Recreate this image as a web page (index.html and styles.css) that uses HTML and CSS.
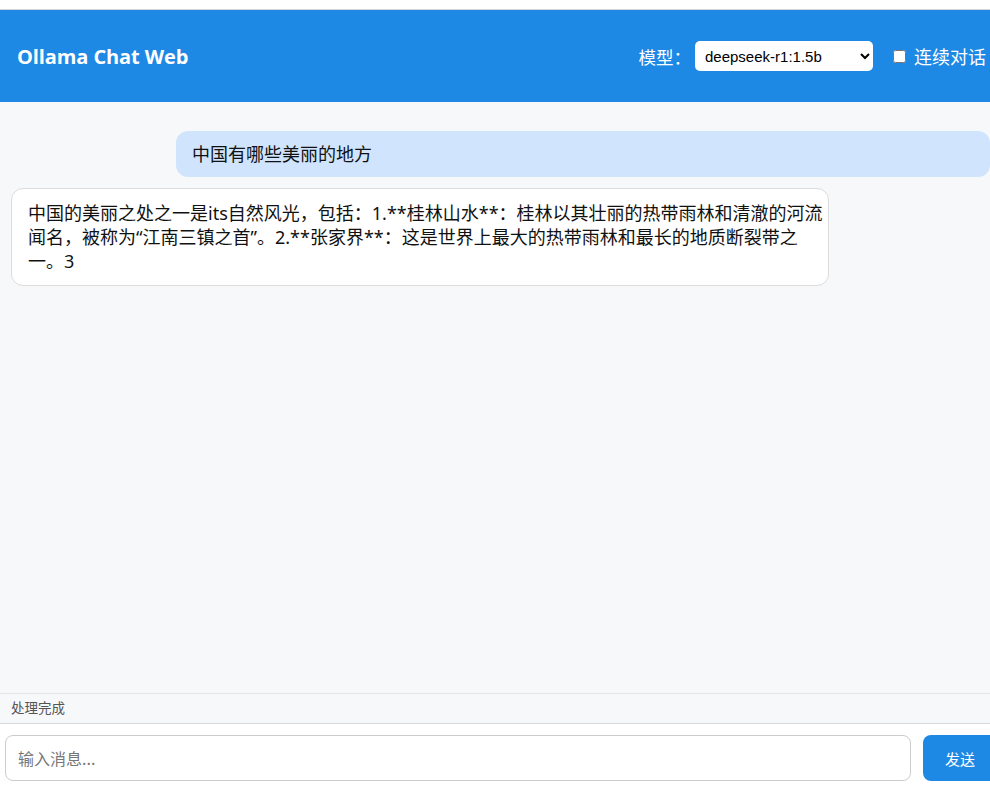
FILE: index.html
```html
<!DOCTYPE html>
<html lang="zh-CN">
<head>
<meta charset="utf-8">
<title>Ollama Chat Web</title>
<link rel="stylesheet" href="styles.css">
</head>
<body>
<div class="app">
  <header class="header">
    <h1 class="title">Ollama Chat Web</h1>
    <div class="controls">
      <label class="model-label" for="model">模型：</label>
      <select id="model" class="model-select">
        <option>deepseek-r1:1.5b</option>
      </select>
      <label class="continuous">
        <input type="checkbox" class="continuous-box">
        <span>连续对话</span>
      </label>
    </div>
  </header>
  <main class="messages">
    <div class="msg user">中国有哪些美丽的地方</div>
    <div class="msg ai">中国的美丽之处之一是its自然风光，包括：1.**桂林山水**：桂林以其壮丽的热带雨林和清澈的河流闻名，被称为“江南三镇之首”。2.**张家界**：这是世界上最大的热带雨林和最长的地质断裂带之一。3</div>
  </main>
  <div class="status">处理完成</div>
  <footer class="composer">
    <input class="composer-input" type="text" placeholder="输入消息...">
    <button class="send">发送</button>
  </footer>
</div>
</body>
</html>
```

FILE: styles.css
```css
html, body {
  margin: 0;
  padding: 0;
  overflow: hidden;
  background: #ffffff;
}
body {
  font-family: "Noto Sans", "Noto Sans CJK SC", sans-serif;
  color: #111;
}
.app {
  width: 1010px;
  height: 780px;
  margin-top: 9px;
  border-top: 1px solid #d4d4d4;
  display: flex;
  flex-direction: column;
  background: #f7f8fa;
}
.header {
  flex: 0 0 92px;
  background: #1e88e5;
  color: #fff;
  display: flex;
  align-items: center;
  justify-content: space-between;
  padding: 0 24px 0 17px;
}
.title {
  margin: 0;
  font-family: "Open Sans", "Noto Sans", sans-serif;
  font-size: 20px;
  font-weight: 700;
  letter-spacing: -0.1px;
}
.controls {
  display: flex;
  align-items: center;
}
.model-label {
  font-size: 17.5px;
  margin-right: 4px;
}
.model-select {
  width: 178px;
  height: 30px;
  border: none;
  border-radius: 5px;
  background: #fff;
  font-family: "Liberation Sans", Arial, sans-serif;
  font-size: 15px;
  color: #000;
  padding: 0 6px;
}
.continuous {
  display: flex;
  align-items: center;
  margin-left: 20px;
  font-size: 18px;
}
.continuous-box {
  width: 13px;
  height: 13px;
  margin: 0 8px 0 0;
}
.messages {
  flex: 1;
  display: flex;
  flex-direction: column;
  gap: 11px;
  padding: 29px 20px 0 11px;
  overflow: hidden;
}
.msg {
  font-size: 18px;
  line-height: 24px;
  border-radius: 12px;
  box-sizing: border-box;
}
.user {
  align-self: flex-end;
  width: 814px;
  background: #d0e5fd;
  padding: 11px 16px;
}
.ai {
  align-self: flex-start;
  width: 818px;
  background: #fff;
  border: 1px solid #dcdcdc;
  padding: 12px 5px 12px 16px;
}
.status {
  flex: 0 0 auto;
  height: 29px;
  line-height: 29px;
  border-top: 1px solid #e6e6e6;
  border-bottom: 1px solid #d8d8d8;
  padding-left: 11px;
  font-size: 13.5px;
  color: #555;
}
.composer {
  flex: 0 0 auto;
  display: flex;
  gap: 12px;
  background: #fff;
  padding: 11px 13px 9px 5px;
}
.composer-input {
  flex: 1;
  height: 46px;
  box-sizing: border-box;
  border: 1px solid #cccccc;
  border-radius: 8px;
  padding: 0 12px;
  font-family: "Noto Sans CJK SC", "Noto Sans", sans-serif;
  font-size: 16px;
  outline: none;
}
.composer-input::placeholder {
  color: #777;
}
.send {
  width: 74px;
  height: 46px;
  border: none;
  border-radius: 8px;
  background: #1e88e5;
  color: #fff;
  font-family: "Noto Sans CJK SC", "Noto Sans", sans-serif;
  font-size: 15px;
}
```
